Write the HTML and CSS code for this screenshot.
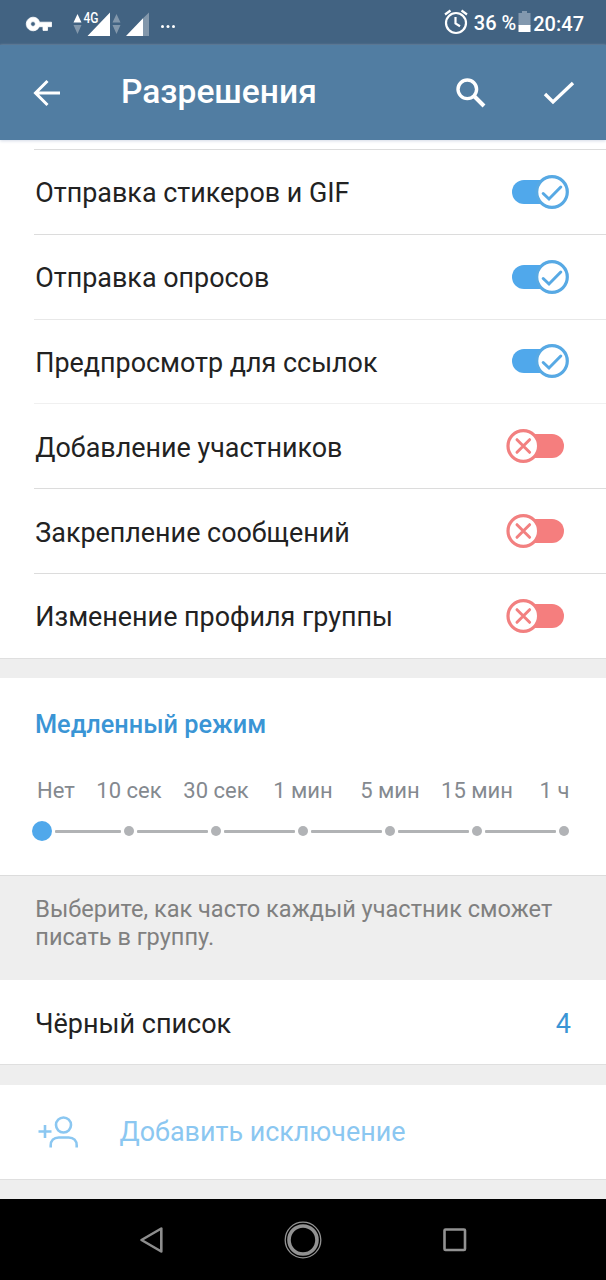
FILE: index.html
```html
<!DOCTYPE html>
<html lang="ru">
<head>
<meta charset="utf-8">
<title>Разрешения</title>
<link rel="stylesheet" href="styles.css">
</head>
<body>
<svg class="defs" aria-hidden="true">
  <symbol id="on" viewBox="0 0 64 36">
    <rect x="6" y="6" width="44" height="24" rx="12" fill="#50a8eb"/>
    <circle cx="46" cy="18" r="15.3" fill="#fff" stroke="#57a9e4" stroke-width="3.2"/>
    <path d="M37.200 19.500l5.800 5.500L54.800 13" fill="none" stroke="#57a9e4" stroke-width="3" stroke-linecap="round"/>
  </symbol>
  <symbol id="off" viewBox="0 0 64 36">
    <rect x="14" y="6" width="44" height="24" rx="12" fill="#f57e7e"/>
    <circle cx="17.300" cy="18" r="15.300" fill="#fff" stroke="#f28080" stroke-width="3.2"/>
    <path d="M11 11.700l12.600 12.600M23.600 11.700L11 24.300" fill="none" stroke="#f28080" stroke-width="3" stroke-linecap="round"/>
  </symbol>
</svg>
<div class="screen">
  <div class="status">
    <svg class="status-left" width="180" height="45" viewBox="0 0 180 45">
      <path fill="#fff" stroke="#fff" stroke-width=".8" stroke-linejoin="round" fill-rule="evenodd" d="M33 17.200a6.800 6.800 0 1 0 6.300 9.500H43v3.700h4.500v-3.700H51.500v-4.500H39.500A6.800 6.800 0 0 0 33 17.200zm0 4.400a2.400 2.400 0 1 1 0 4.800a2.400 2.400 0 0 1 0-4.800z"/>
      <path fill="#fff" d="M73.500 22.500h8L77.500 14zM87.500 36H110V12.500zM126 36h17V18.300z"/>
      <path fill="#8297ab" d="M73.500 25h8l-4 9zM112.500 22.500h8l-4-8.500zM112.500 25h8l-4 9zM143 18.300V36h6V12.500z"/>
      <text class="net" x="83.500" y="23" textLength="15" lengthAdjust="spacingAndGlyphs">4G</text>
      <g fill="#fff"><circle cx="162.500" cy="26.500" r="1.500"/><circle cx="168" cy="26.500" r="1.500"/><circle cx="173.500" cy="26.500" r="1.500"/></g>
    </svg>
    <div class="status-right">
      <svg class="alarm" width="24" height="26" viewBox="0 0 24 26" fill="none" stroke="#fff" stroke-width="2.200">
        <circle cx="12" cy="14" r="10"/><path d="M11.500 8v6.500l4.500 2.700M1 5.500L6.500 1.500M23 5.500l-5.500-4"/>
      </svg>
      <span class="percent">36 %</span>
      <svg class="battery" width="13" height="22" viewBox="0 0 13 22">
        <path fill="#8298ae" d="M4 0h5v2h3.500v13H.500V2H4z"/><path fill="#fff" d="M.500 14h12v7H.500z"/>
      </svg>
      <span class="clock">20:47</span>
    </div>
  </div>
  <header class="bar">
    <svg class="back" width="30" height="30" viewBox="0 0 30 30" fill="none" stroke="#fff" stroke-width="3"><path d="M28 15H3M15.500 3L3.500 15l12 12"/></svg>
    <h1 class="title">Разрешения</h1>
    <svg class="search" width="32" height="32" viewBox="0 0 32 32" fill="none" stroke="#fff"><circle cx="12.300" cy="12.300" r="9.300" stroke-width="3.400"/><path d="M19 19l10 10" stroke-width="4"/></svg>
    <svg class="done" width="32" height="26" viewBox="0 0 32 26" fill="none" stroke="#fff" stroke-width="3.400"><path d="M2 14l8 8L30 3"/></svg>
  </header>
  <main>
    <ul class="perms">
      <li class="perm"><span>Отправка стикеров и GIF</span><svg class="toggle"><use href="#on"/></svg></li>
      <li class="perm"><span>Отправка опросов</span><svg class="toggle"><use href="#on"/></svg></li>
      <li class="perm light"><span>Предпросмотр для ссылок</span><svg class="toggle"><use href="#on"/></svg></li>
      <li class="perm faint"><span>Добавление участников</span><svg class="toggle"><use href="#off"/></svg></li>
      <li class="perm"><span>Закрепление сообщений</span><svg class="toggle"><use href="#off"/></svg></li>
      <li class="perm"><span>Изменение профиля группы</span><svg class="toggle"><use href="#off"/></svg></li>
    </ul>
    <div class="gap"></div>
    <section class="slow">
      <h2 class="heading">Медленный режим</h2>
      <div class="labels"><span>Нет</span><span>10 сек</span><span>30 сек</span><span>1 мин</span><span>5 мин</span><span>15 мин</span><span>1 ч</span></div>
      <div class="slider">
        <i class="knob"></i><i class="line"></i><i class="dot"></i><i class="line"></i><i class="dot"></i><i class="line"></i><i class="dot"></i><i class="line"></i><i class="dot"></i><i class="line"></i><i class="dot"></i><i class="line"></i><i class="dot"></i>
      </div>
    </section>
    <p class="hint">Выберите, как часто каждый участник сможет<br>писать в группу.</p>
    <div class="black"><span>Чёрный список</span><span class="count">4</span></div>
    <div class="gap gap-2"></div>
    <div class="add">
      <svg width="42" height="34" viewBox="0 0 42 34" fill="none" stroke="#8bc7f1" stroke-width="2.600"><path d="M.500 16.500H13.500M7 10v13"/><circle cx="25.500" cy="10" r="7.500"/><path d="M12.700 32.500v-2c0-5 3-8 8-8h10c5 0 8 3 8 8v2"/></svg>
      <span>Добавить исключение</span>
    </div>
    <div class="gap gap-3"></div>
  </main>
  <nav class="nav">
    <svg width="24" height="28" viewBox="0 0 24 28"><path d="M22.300 2.500v23L2.500 14z" fill="none" stroke="#8e8e8e" stroke-width="2.600" stroke-linejoin="round"/></svg>
    <svg width="38" height="38" viewBox="0 0 38 38" fill="none" stroke="#929292"><circle cx="19" cy="19" r="17.800" stroke-width="1.300"/><circle cx="19" cy="19" r="14" stroke-width="3.600"/></svg>
    <svg width="24" height="24" viewBox="0 0 24 24"><rect x="1.500" y="1.500" width="20.500" height="20.500" rx="1" fill="none" stroke="#929292" stroke-width="2.600"/></svg>
  </nav>
</div>
</body>
</html>
```
FILE: styles.css
```css
* { box-sizing: border-box; }
body { margin: 0; background: #fff; font-family: Roboto, "Noto Sans", sans-serif; color: #222; }
h1, h2, p, ul { margin: 0; padding: 0; }
ul { list-style: none; }
svg { flex: none; display: block; }
.defs { display: none; }
.screen { width: 606px; height: 1280px; display: flex; flex-direction: column; overflow: hidden; }
.status { height: 45px; background: #426382; display: flex; justify-content: space-between; color: #fff; flex: none; }
.net { font: 500 14.500px Roboto, sans-serif; fill: #fff; }
.status-right { display: flex; align-items: center; padding-right: 22px; font-size: 20px; font-weight: 500; white-space: nowrap; }
.alarm { margin-bottom: 2px; }
.percent { margin-left: 6px; }
.battery { margin: 0 2px 2px 2px; }
.clock { padding-top: 3px; }
.bar { height: 95px; flex: none; background: #517da2; display: flex; align-items: center; padding: 0 31px 0 32px; position: relative; box-shadow: 0 1px 3px #d4dbe7; }
.title { margin: 0 0 2px 59px; color: #fff; font-size: 33.600px; line-height: 40px; font-weight: 500; flex: 1; white-space: nowrap; }
.done { margin-left: 56px; }
main { flex: 1; }
.perms { padding-top: 9px; }
.perm { height: 84.800px; margin-left: 34px; padding: 0 36px 0 1.300px; border-top: 1px solid #dcdcdc; display: flex; align-items: center; justify-content: space-between; font-size: 26.900px; white-space: nowrap; }
.perm span { padding-top: 3px; }
.perm.light { border-color: #e8e8e8; }
.perm.faint { border-color: #f0f0f0; }
.toggle { width: 64px; height: 36px; }
.gap { height: 20px; background: #eee; border-top: 1px solid #dfdfdf; }
.slow { height: 197px; padding: 30px 0 0 35px; }
.heading { color: #3a95d5; font-size: 25.300px; line-height: 34px; font-weight: 500; }
.labels { display: grid; grid-template-columns: 55.500px repeat(5, 87px) 68px; margin: 35px 0 0 -5px; font-size: 22px; line-height: 28px; color: #84898f; white-space: nowrap; text-align: center; }
.labels span:first-child { text-align: left; padding-left: 7px; }
.slider { display: flex; align-items: center; margin: 16px 0 0 -3px; width: 538px; height: 21px; }
.knob { width: 20px; height: 20px; border-radius: 50%; background: #50a8eb; flex: none; }
.dot { width: 10px; height: 10px; border-radius: 50%; background: #b1b3b6; flex: none; }
.line { width: 71px; height: 3px; border-radius: 1px; background: #b1b3b5; margin: 0 3px; flex: none; }
.knob + .line { width: 66px; }
.hint { height: 105px; background: #eee; border-top: 1px solid #dcdcdc; padding: 19px 0 0 35.300px; color: #808080; font-size: 23.550px; line-height: 28px; white-space: nowrap; }
.black { height: 84px; padding: 4px 35px 0 35px; display: flex; align-items: center; justify-content: space-between; font-size: 27px; }
.count { color: #3a95d5; }
.gap-2 { height: 21px; }
.add { height: 94px; padding-left: 38px; display: flex; align-items: center; gap: 39.500px; color: #8bc7f1; font-size: 26.900px; }
.nav { height: 81px; flex: none; background: #000; display: flex; align-items: center; padding: 0 139px; justify-content: space-between; }
```
